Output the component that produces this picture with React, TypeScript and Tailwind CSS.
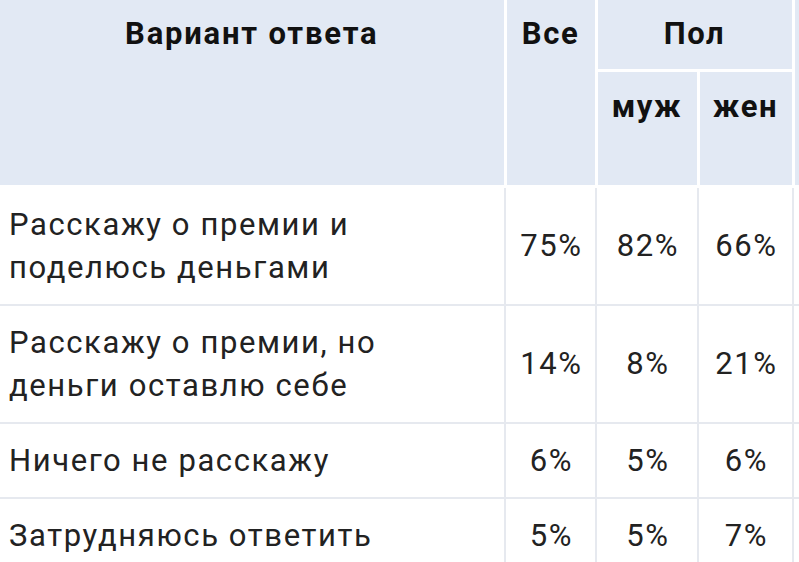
import React from "react";

const rows = [
  { label: ["Расскажу о премии и", "поделюсь деньгами"], v: ["75%", "82%", "66%"] },
  { label: ["Расскажу о премии, но", "деньги оставлю себе"], v: ["14%", "8%", "21%"] },
  { label: ["Ничего не расскажу"], v: ["6%", "5%", "6%"] },
  { label: ["Затрудняюсь ответить"], v: ["5%", "5%", "7%"] },
];

export default function App() {
  return (
    <div className="w-[799px] h-[562px] overflow-hidden bg-white" style={{ fontFamily: "Roboto, 'Noto Sans', sans-serif" }}>
      <table className="table-fixed border-collapse w-[900px] text-[31px] leading-[43px] tracking-[1.6px]">
        <colgroup>
          <col className="w-[505px]" />
          <col className="w-[91px]" />
          <col className="w-[102px]" />
          <col className="w-[95px]" />
          <col className="w-[107px]" />
        </colgroup>
        <thead>
          <tr className="h-[70px]">
            <th rowSpan={2} className="bg-[#e2e9f4] border-[3px] border-t-0 border-l-0 border-white align-top pt-[12px] font-bold text-[#111] tracking-[1.8px]">Вариант ответа</th>
            <th rowSpan={2} className="bg-[#e2e9f4] border-[3px] border-t-0 border-white align-top pt-[12px] font-bold text-[#111]">Все</th>
            <th colSpan={2} className="bg-[#e2e9f4] border-[3px] border-t-0 border-white align-top pt-[12px] font-bold text-[#111]">Пол</th>
            <th rowSpan={2} className="bg-[#e2e9f4] border-[3px] border-t-0 border-white"></th>
          </tr>
          <tr className="h-[116px]">
            <th className="bg-[#e2e9f4] border-[3px] border-white align-top pt-[13px] font-bold text-[#111]">муж</th>
            <th className="bg-[#e2e9f4] border-[3px] border-white align-top pt-[13px] font-bold text-[#111]">жен</th>
          </tr>
        </thead>
        <tbody className="text-[#222]">
          {rows.map((r, i) => (
            <tr key={i}>
              <td className="border-2 border-l-0 border-[#e6e9ef] pl-[9px] py-[15px] align-middle">
                {r.label.map((l, j) => (
                  <div key={j}>{l}</div>
                ))}
              </td>
              {r.v.map((v, j) => (
                <td key={j} className="border-2 border-[#e6e9ef] text-center align-middle pl-[2px]">{v}</td>
              ))}
              <td className="border-2 border-[#e6e9ef]"></td>
            </tr>
          ))}
        </tbody>
      </table>
    </div>
  );
}
